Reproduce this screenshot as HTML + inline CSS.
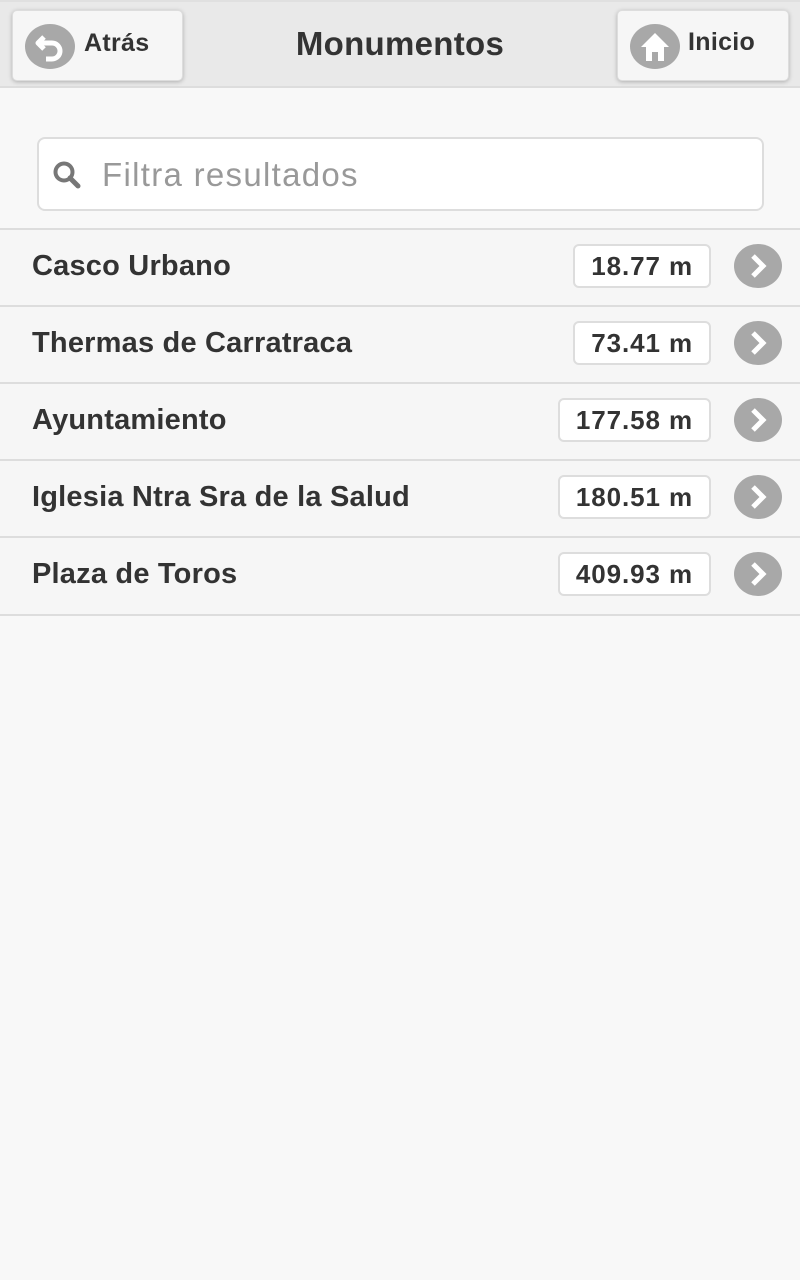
<!DOCTYPE html>
<html><head><meta charset="utf-8"><style>
*{margin:0;padding:0;box-sizing:border-box}
body{width:800px;height:1280px;background:#f8f8f8;font-family:"Liberation Sans",sans-serif;color:#333;position:relative;overflow:hidden}
.hdr{position:absolute;left:0;top:0;width:800px;height:88px;background:#e9e9e9;border-top:2px solid #e0e0e0;border-bottom:2px solid #ddd}
.btn{position:absolute;top:8px;height:71px;background:#f6f6f6;border:1px solid #ddd;border-radius:5px;box-shadow:0 1px 4px rgba(0,0,0,.25);font-weight:bold;font-size:25px;color:#333}
.btn .ic{position:absolute;left:12px;top:13px;width:50px;height:45px;border-radius:50%;background:#a8a8a8}
.btn span{position:absolute;top:17px;letter-spacing:0.3px}
.title{position:absolute;left:0;width:800px;top:23px;text-align:center;font-weight:bold;font-size:33px;letter-spacing:0.3px}
.search{position:absolute;left:37px;top:137px;width:727px;height:74px;background:#fff;border:2px solid #ddd;border-radius:8px}
.search span{position:absolute;left:63px;top:17px;font-size:33px;color:#999;letter-spacing:1.3px}
.row{position:absolute;left:0;width:800px;height:78px;border-top:2px solid #ddd;background:#f6f6f6}
.row .t{position:absolute;left:32px;top:20px;font-weight:bold;font-size:29px;letter-spacing:0.2px}
.row .b{position:absolute;right:89px;top:14px;height:44px;background:#fff;border:2px solid #ddd;border-radius:6px;font-weight:bold;font-size:26px;padding:5px 16px 0 16px;letter-spacing:0.9px}
.row svg{position:absolute;left:734px;top:14px}
</style></head><body>
<div class="hdr">
 <div class="btn" style="left:12px;width:171px"><div class="ic"><svg width="50" height="45" viewBox="0 0 50 45"><path d="M19 13 L13 19 L19 25 M13 19 H27 A8 8 0 0 1 27 35 H21" fill="none" stroke="#fff" stroke-width="5" stroke-linejoin="round"/></svg></div><span style="left:71px;top:18px">Atrás</span></div>
 <div class="title">Monumentos</div>
 <div class="btn" style="left:617px;width:172px"><div class="ic"><svg width="50" height="45" viewBox="0 0 50 45"><path d="M25 9 L39 23 H34 V37 H28 V28 H22 V37 H16 V23 H11 Z" fill="#fff"/></svg></div><span style="left:70px">Inicio</span></div>
</div>
<div class="search"><svg style="position:absolute;left:13px;top:21px" width="32" height="32" viewBox="0 0 32 32"><circle cx="12" cy="12" r="8.5" fill="none" stroke="#777" stroke-width="4"/><path d="M18 18 L26 26" stroke="#777" stroke-width="5" stroke-linecap="round"/></svg><span>Filtra resultados</span></div>
<div class="row" style="top:228px"><div class="t">Casco Urbano</div><div class="b">18.77 m</div><svg width="48" height="44"><ellipse cx="24" cy="22" rx="24" ry="22" fill="#a8a8a8"/><path d="M19 12 L29 22 L19 32" fill="none" stroke="#fff" stroke-width="5"/></svg></div>
<div class="row" style="top:305px"><div class="t">Thermas de Carratraca</div><div class="b">73.41 m</div><svg width="48" height="44"><ellipse cx="24" cy="22" rx="24" ry="22" fill="#a8a8a8"/><path d="M19 12 L29 22 L19 32" fill="none" stroke="#fff" stroke-width="5"/></svg></div>
<div class="row" style="top:382px"><div class="t">Ayuntamiento</div><div class="b">177.58 m</div><svg width="48" height="44"><ellipse cx="24" cy="22" rx="24" ry="22" fill="#a8a8a8"/><path d="M19 12 L29 22 L19 32" fill="none" stroke="#fff" stroke-width="5"/></svg></div>
<div class="row" style="top:459px"><div class="t">Iglesia Ntra Sra de la Salud</div><div class="b">180.51 m</div><svg width="48" height="44"><ellipse cx="24" cy="22" rx="24" ry="22" fill="#a8a8a8"/><path d="M19 12 L29 22 L19 32" fill="none" stroke="#fff" stroke-width="5"/></svg></div>
<div class="row" style="top:536px;border-bottom:2px solid #ddd;height:80px"><div class="t">Plaza de Toros</div><div class="b">409.93 m</div><svg width="48" height="44"><ellipse cx="24" cy="22" rx="24" ry="22" fill="#a8a8a8"/><path d="M19 12 L29 22 L19 32" fill="none" stroke="#fff" stroke-width="5"/></svg></div>
</body></html>
